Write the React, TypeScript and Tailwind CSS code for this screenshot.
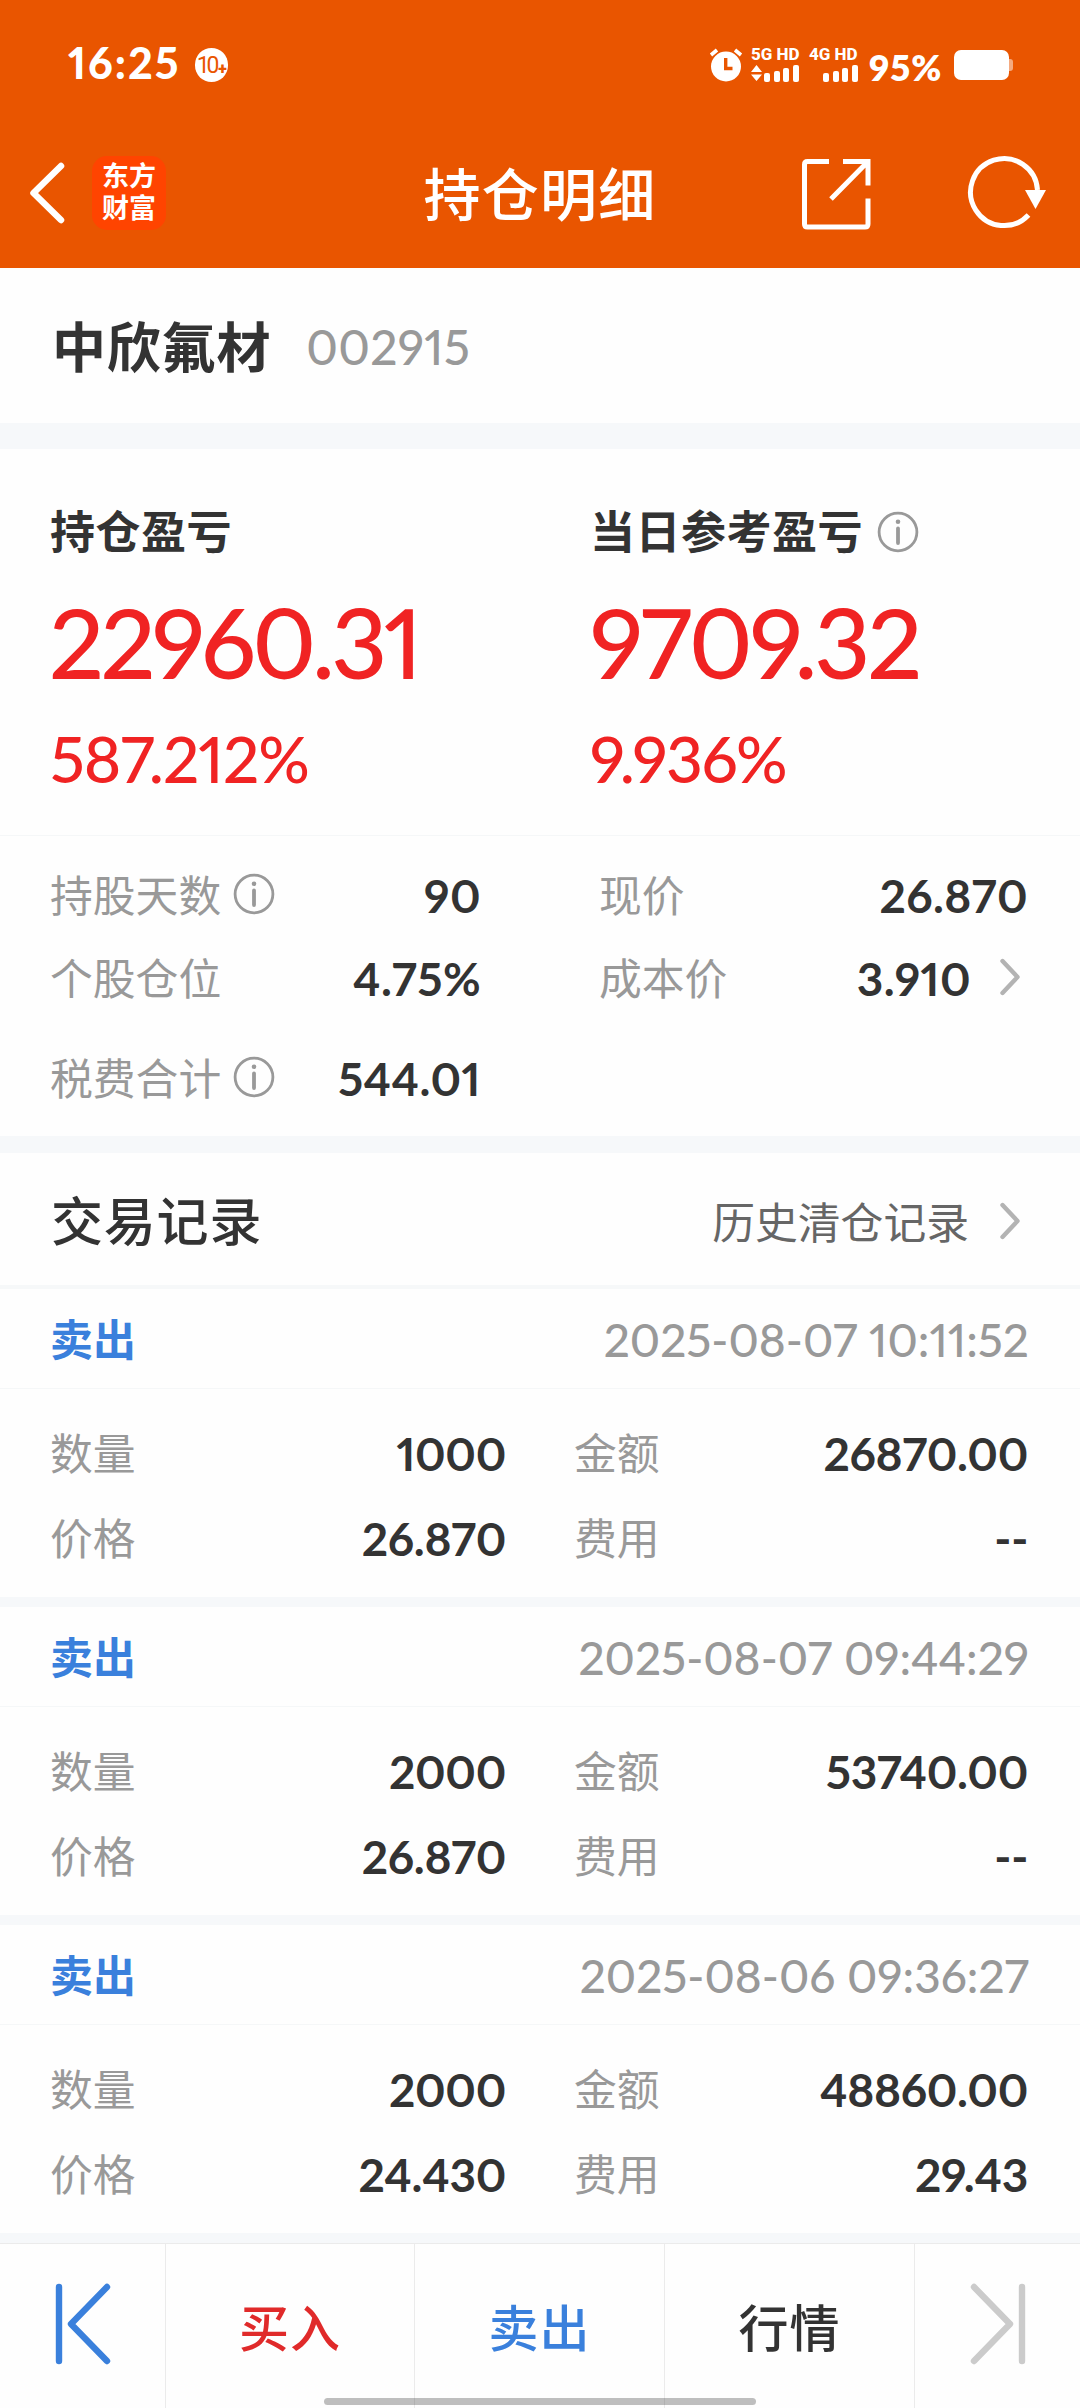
type Trade = {
  side: string;
  time: string;
  amount: string;
  total: string;
  price: string;
  fee: string;
};

const trades: Trade[] = [
  {
    side: "卖出",
    time: "2025-08-07 10:11:52",
    amount: "1000",
    total: "26870.00",
    price: "26.870",
    fee: "--",
  },
  {
    side: "卖出",
    time: "2025-08-07 09:44:29",
    amount: "2000",
    total: "53740.00",
    price: "26.870",
    fee: "--",
  },
  {
    side: "卖出",
    time: "2025-08-06 09:36:27",
    amount: "2000",
    total: "48860.00",
    price: "24.430",
    fee: "29.43",
  },
];

function InfoIcon() {
  return (
    <svg width="42" height="42" viewBox="0 0 42 42" className="mb-[3px] shrink-0">
      <circle cx="21" cy="21" r="18.9" fill="none" stroke="#999" strokeWidth="2.8" />
      <circle cx="21" cy="10.8" r="2.3" fill="#999" />
      <path d="M21 17.5V32" stroke="#999" strokeWidth="3.8" strokeLinecap="round" />
    </svg>
  );
}

function ChevronIcon() {
  return (
    <svg width="22" height="38" viewBox="0 0 22 38" className="shrink-0">
      <path
        d="M3.5 3L18.5 19L3.5 35"
        fill="none"
        stroke="#b3b3b3"
        strokeWidth="4.4"
        strokeLinecap="round"
        strokeLinejoin="round"
      />
    </svg>
  );
}

function SignalBars() {
  return (
    <svg width="36" height="18" viewBox="0 0 36 18" fill="#fff">
      <rect x="0" y="9" width="6" height="9" rx="2" />
      <rect x="10" y="7" width="6" height="11" rx="2" />
      <rect x="19" y="4" width="6" height="14" rx="2" />
      <rect x="29" y="1" width="6" height="17" rx="2" />
    </svg>
  );
}

function StatusBar() {
  return (
    <div className="flex h-[124px] items-start pl-[68px] pr-[66px] text-white">
      <div className="mt-[41px] h-[44px] w-[110px] text-[43px] leading-[44px] font-black tracking-[2px]">
        16:25
      </div>
      <div className="mt-[48px] ml-[17px] flex h-[34px] w-[33px] items-center justify-center rounded-full bg-white font-['Roboto'] text-[23px] leading-none tracking-[-1.5px] text-[#e95500]">
        10
        <span className="mt-[8px] text-[16px] font-black">+</span>
      </div>
      <div className="mt-[46px] ml-auto flex items-start">
        <svg width="34" height="36" viewBox="0 0 34 36" className="mt-px">
          <circle cx="17" cy="19.5" r="15" fill="#fff" />
          <path d="M2 8L8 3M32 8L26 3" stroke="#fff" strokeWidth="3.6" />
          <path d="M16.7 11V21.5H23.5" fill="none" stroke="#e95500" strokeWidth="3.4" />
        </svg>
        <div className="ml-[8px] w-[50px]">
          <div className="h-[15px] font-['Roboto'] text-[17px] leading-[17px] font-extrabold whitespace-nowrap">
            5G HD
          </div>
          <div className="mt-[3px] flex items-end">
            <svg width="11" height="18" viewBox="0 0 11 18" fill="#fff" className="mr-[2px]">
              <path d="M5.5 1L11 8H0ZM5.5 17L0 10.500H11Z" />
            </svg>
            <SignalBars />
          </div>
        </div>
        <div className="ml-[8px] w-[50px]">
          <div className="h-[15px] font-['Roboto'] text-[17px] leading-[17px] font-extrabold whitespace-nowrap">
            4G HD
          </div>
          <div className="mt-[3px] flex justify-end">
            <SignalBars />
          </div>
        </div>
        <div className="mt-[3px] ml-[10px] w-[76px] text-[36px] leading-[36px] font-extrabold tracking-[1px]">
          95%
        </div>
        <svg width="60" height="32" viewBox="0 0 60 32" className="mt-[3px] ml-[9px]">
          <rect x="50" y="10" width="9" height="12" rx="3" fill="#fff" opacity="0.5" />
          <rect x="0" y="1" width="55" height="30" rx="7" fill="#fff" />
        </svg>
      </div>
    </div>
  );
}

function TitleBar() {
  return (
    <div className="grid h-[138px] grid-cols-3 items-center text-white">
      <div className="flex items-center pl-[29px]">
        <svg width="36" height="62" viewBox="0 0 36 62">
          <path
            d="M32 4L4.500 31L32 58"
            fill="none"
            stroke="#fff"
            strokeWidth="6.500"
            strokeLinecap="round"
            strokeLinejoin="round"
          />
        </svg>
        <div className="ml-[27px] flex h-[74px] w-[74px] flex-col items-center justify-center rounded-[15px] bg-[#ff4400] pb-[2px] text-[27px] leading-[32px] font-bold">
          <span>东方</span>
          <span>财富</span>
        </div>
      </div>
      <h1 className="pt-[2px] text-center text-[57px] leading-[60px] font-medium tracking-[1.2px]">持仓明细</h1>
      <div className="flex items-center justify-end pr-[33px]">
        <svg width="72" height="74" viewBox="0 0 72 74" fill="none" stroke="#fff" strokeWidth="5">
          <path d="M29 5.500H7.500Q4.500 5.500 4.500 8.500V68Q4.500 71 7.500 71H65Q68 71 68 68V42.500" />
          <path d="M43 5.500H68V29.500M68 5.500L31 43" />
        </svg>
        <svg width="82" height="76" viewBox="0 0 82 76" className="ml-[93px]">
          <path
            d="M63.500 60A33.500 33.500 0 1 1 72.500 35"
            fill="none"
            stroke="#fff"
            strokeWidth="5"
          />
          <path d="M60 35H81L70.500 54Z" fill="#fff" />
        </svg>
      </div>
    </div>
  );
}

function Field({ label, value }: { label: string; value: string }) {
  return (
    <div className="flex items-center justify-between">
      <span className="pt-px text-[42.8px] text-[#999]">{label}</span>
      <span className="text-[46px] font-bold tracking-[-0.3px] text-[#333]">{value}</span>
    </div>
  );
}

function TradeCard({ trade }: { trade: Trade }) {
  return (
    <article className="h-[318px] shrink-0 border-b-[10px] border-[#f6f8fa]">
      <div className="flex h-[100px] items-center justify-between border-b border-[#f5f7f8] pt-[2px] pr-[51px] pl-[50px]">
        <span className="pt-[2px] text-[43px] font-bold text-[#3a80dc]">{trade.side}</span>
        <span className="text-[46px] font-medium text-[#999]">{trade.time}</span>
      </div>
      <div className="grid grid-cols-[456px_454px] gap-x-[68px] pt-[22px] pl-[50px] leading-[84px]">
        <Field label="数量" value={trade.amount} />
        <Field label="金额" value={trade.total} />
        <Field label="价格" value={trade.price} />
        <Field label="费用" value={trade.fee} />
      </div>
    </article>
  );
}

export default function App() {
  return (
    <div className="relative flex h-[2408px] w-[1080px] flex-col overflow-hidden bg-[#fefefe] font-['Lato','Noto_Sans_CJK_SC',sans-serif] text-[#333] [font-feature-settings:'pnum']">
      <header className="h-[268px] shrink-0 bg-[#e95500]">
        <StatusBar />
        <TitleBar />
      </header>

      {/* 股票名称 */}
      <section className="flex h-[181px] shrink-0 items-center border-b-[26px] border-[#f6f8fa] pt-[3px] pl-[52px]">
        <span className="text-[54px] font-bold tracking-[0.8px]">中欣氟材</span>
        <span className="ml-[35px] text-[48px] font-medium tracking-[0.3px] text-[#999]">002915</span>
      </section>

      {/* 盈亏 */}
      <section className="grid h-[387px] shrink-0 grid-cols-[541px_541px] border-b border-[#f5f7f8] pl-[49px] text-[#f02323]">
        <div className="pt-[54px]">
          <div className="ml-px flex h-[60px] items-center text-[45px] font-bold tracking-[0.5px] text-[#333]">持仓盈亏</div>
          <div className="mt-[29px] h-[100px] text-[97px] leading-[100px] font-medium tracking-[-3.6px]">22960.31</div>
          <div className="mt-[34px] ml-px h-[66px] text-[64px] leading-[66px] font-medium tracking-[-1px]">587.212%</div>
        </div>
        <div className="pt-[54px]">
          <div className="flex h-[60px] items-center text-[45px] font-bold tracking-[0.5px] text-[#333]">
            <span className="mr-[14px]">当日参考盈亏</span>
            <InfoIcon />
          </div>
          <div className="mt-[29px] h-[100px] text-[97px] leading-[100px] font-medium tracking-[-3px]">9709.32</div>
          <div className="mt-[34px] h-[66px] text-[64px] leading-[66px] font-medium tracking-[-1.6px]">9.936%</div>
        </div>
      </section>

      {/* 持仓信息 */}
      <section className="grid h-[317px] shrink-0 grid-cols-[431px_429px] content-start gap-x-[118px] border-b-[17px] border-[#f6f8fa] pt-[18px] pl-[50px] text-[46px] font-bold tracking-[0.4px]">
        <div className="flex h-[83px] items-center">
          <span className="mr-[12px] pt-[2px] text-[42.8px] font-normal tracking-normal text-[#999]">持股天数</span>
          <InfoIcon />
          <span className="ml-auto">90</span>
        </div>
        <div className="flex h-[83px] items-center justify-between">
          <span className="pt-[2px] text-[42.8px] font-normal tracking-normal text-[#999]">现价</span>
          <span>26.870</span>
        </div>
        <div className="flex h-[83px] items-center justify-between">
          <span className="pt-[2px] text-[42.8px] font-normal tracking-normal text-[#999]">个股仓位</span>
          <span>4.75%</span>
        </div>
        <div className="flex h-[83px] items-center">
          <span className="pt-[2px] text-[42.8px] font-normal tracking-normal text-[#999]">成本价</span>
          <span className="mr-[28px] ml-auto">3.910</span>
          <div className="mr-[7px] mb-[4px]">
            <ChevronIcon />
          </div>
        </div>
        <div className="mt-[17px] flex h-[83px] items-center">
          <span className="mr-[12px] pt-[2px] text-[42.8px] font-normal tracking-normal text-[#999]">税费合计</span>
          <InfoIcon />
          <span className="ml-auto">544.01</span>
        </div>
      </section>

      {/* 交易记录 */}
      <section className="flex h-[136px] shrink-0 items-center justify-between border-b-4 border-[#f6f8f9] pt-[3px] pr-[59px] pl-[51px]">
        <h2 className="text-[52px] font-medium tracking-[0.8px]">交易记录</h2>
        <div className="flex items-center text-[42.8px] text-[#666]">
          <span className="mt-[6px] mr-[30px]">历史清仓记录</span>
          <ChevronIcon />
        </div>
      </section>

      {trades.map((trade) => (
        <TradeCard key={trade.time} trade={trade} />
      ))}

      <nav className="grid h-[165px] grid-cols-[166px_249px_250px_250px_165px] divide-x divide-[#ebebeb] border-t border-[#ebebeb] text-center text-[50px] leading-[164px] font-medium tracking-[1px]">
        <div className="pt-[39px] pl-[55px]">
          <svg width="56" height="82" viewBox="0 0 56 82" fill="none" stroke="#3a80dc" strokeWidth="6.4" strokeLinecap="round">
            <path d="M4 4V78" />
            <path d="M52 4L16 41L52 78" strokeLinejoin="round" />
          </svg>
        </div>
        <div className="pt-[2px] text-[#e02a2a]">买入</div>
        <div className="pt-[2px] text-[#3a80dc]">卖出</div>
        <div className="pt-[2px]">行情</div>
        <div className="pt-[39px] pl-[55px]">
          <svg width="56" height="82" viewBox="0 0 56 82" fill="none" stroke="#cbcbcb" strokeWidth="6.4" strokeLinecap="round">
            <path d="M52 4V78" />
            <path d="M4 4L40 41L4 78" strokeLinejoin="round" />
          </svg>
        </div>
      </nav>
      <div className="absolute bottom-[3px] left-[324px] h-[7px] w-[432px] rounded-full bg-black/25" />
    </div>
  );
}
